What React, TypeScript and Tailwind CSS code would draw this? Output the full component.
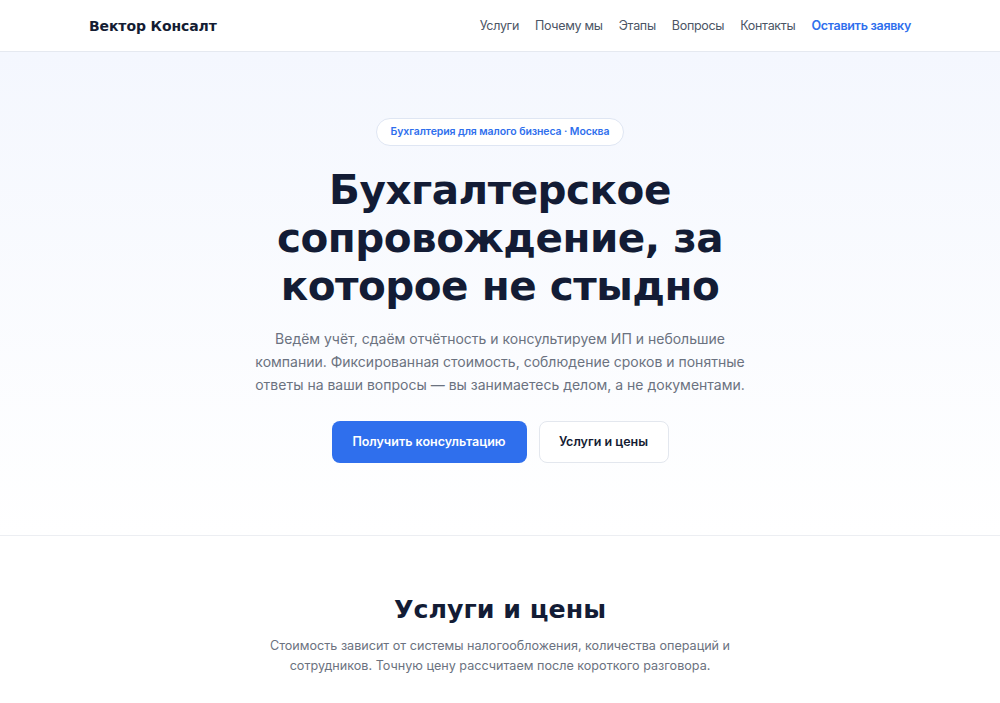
import React from "react";

const heading = { fontFamily: '"DejaVu Sans", "Noto Sans", sans-serif' };

export default function App() {
  return (
    <div className="min-h-screen bg-white text-[#0f1a33]" style={{ fontFamily: 'Inter, "Noto Sans", sans-serif' }}>
      <header className="h-[52px] border-b border-[#e5e9f0] bg-white pt-[2px]">
        <div className="mx-auto flex h-full w-[822px] items-center justify-between">
          <div className="text-[14px] font-bold tracking-[-0.1px] text-[#141c33]" style={heading}>Вектор Консалт</div>
          <nav className="flex items-center gap-[16px] text-[12.5px] tracking-[-0.3px] text-[#4b5565]">
            <span>Услуги</span>
            <span>Почему мы</span>
            <span>Этапы</span>
            <span>Вопросы</span>
            <span>Контакты</span>
            <span className="font-semibold text-[#2f6fed]">Оставить заявку</span>
          </nav>
        </div>
      </header>

      <section className="border-b border-[#eceef2] bg-gradient-to-b from-[#f4f7fe] to-white pt-[66px] pb-[72px]">
        <div className="flex flex-col items-center">
          <div className="flex h-[28px] items-center rounded-full border border-[#dfe6f3] bg-white px-[14px] text-[10.5px] font-semibold tracking-[-0.1px] text-[#2f6fed]">
            Бухгалтерия для малого бизнеса · Москва
          </div>
          <h1 className="mt-[20px] w-[500px] text-center text-[40.5px] font-bold leading-[48px] tracking-[-0.5px] text-[#131c35]" style={heading}>
            Бухгалтерское сопровождение, за которое не стыдно
          </h1>
          <p className="mt-[17px] w-[500px] text-center text-[14px] leading-[23px] text-[#6b7280]">
            Ведём учёт, сдаём отчётность и консультируем ИП и небольшие компании. Фиксированная стоимость, соблюдение сроков и понятные ответы на ваши вопросы — вы занимаетесь делом, а не документами.
          </p>
          <div className="mt-[25px] flex gap-[12px]">
            <button className="h-[42px] w-[195px] rounded-[8px] bg-[#2f6fed] text-[12.5px] font-semibold text-white">
              Получить консультацию
            </button>
            <button className="h-[42px] w-[130px] rounded-[8px] border border-[#e3e7ee] bg-white text-[12.5px] font-semibold text-[#141c33]">
              Услуги и цены
            </button>
          </div>
        </div>
      </section>

      <section className="pt-[56px]">
        <div className="flex flex-col items-center">
          <h2 className="text-[25.3px] font-bold leading-[36px] text-[#131c35]" style={heading}>Услуги и цены</h2>
          <p className="mt-[8px] w-[462px] text-center text-[12.6px] leading-[20px] text-[#6b7280]">
            Стоимость зависит от системы налогообложения, количества операций и сотрудников. Точную цену рассчитаем после короткого разговора.
          </p>
        </div>
      </section>
    </div>
  );
}
